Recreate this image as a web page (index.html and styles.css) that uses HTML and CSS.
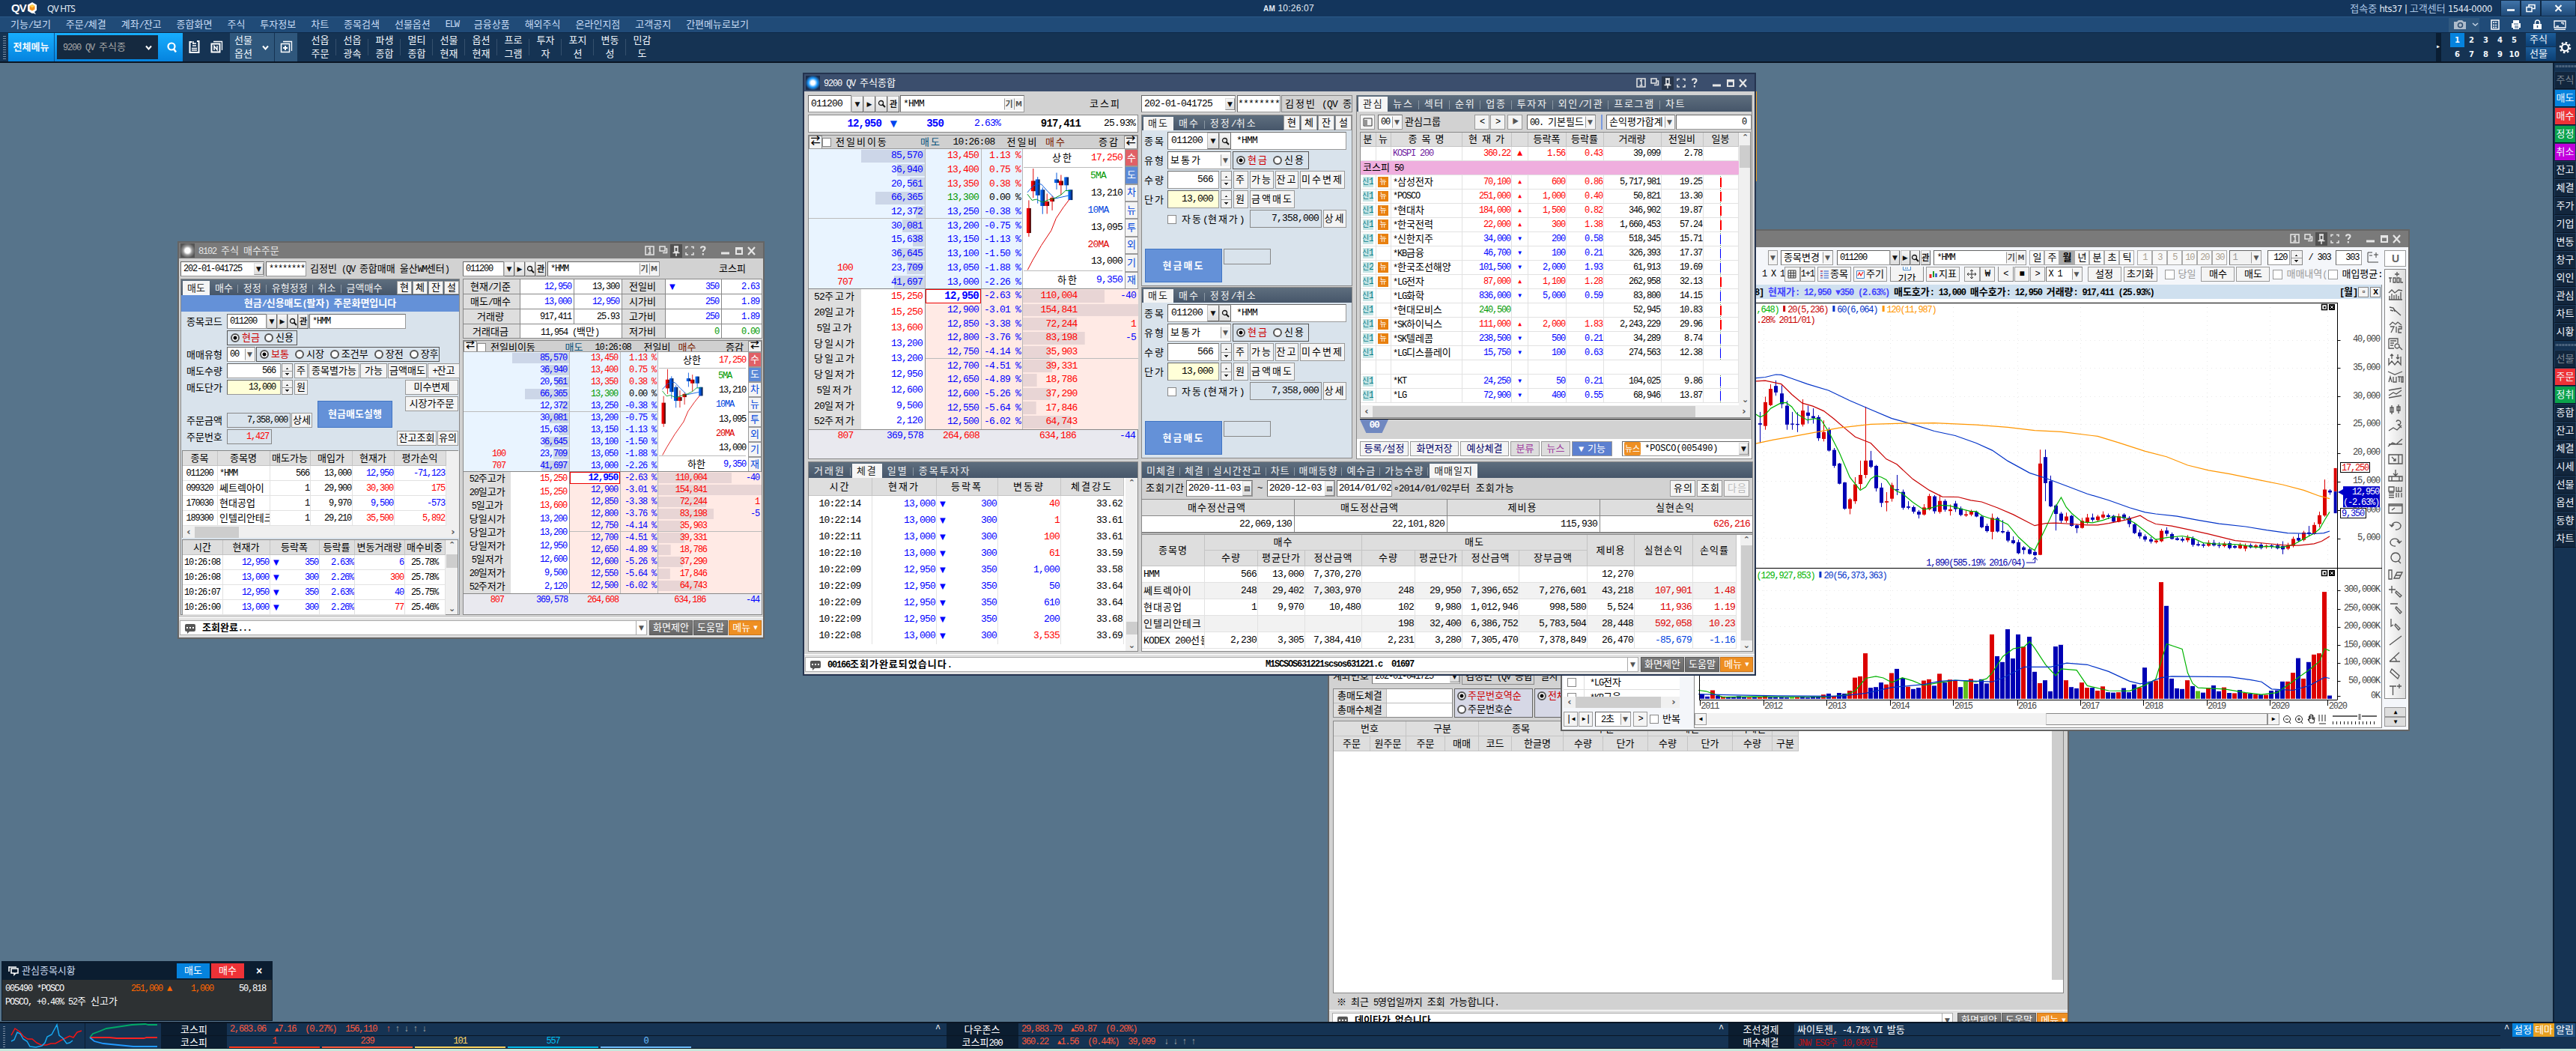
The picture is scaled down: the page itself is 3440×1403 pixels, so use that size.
FILE: index.html
```html
<!DOCTYPE html>
<html lang="ko">
<head>
<meta charset="utf-8">
<title>QV HTS</title>
<link rel="stylesheet" href="styles.css">
</head>
<body>
<div class="app">
  <header class="titlebar">
    <svg class="logo" width="36" height="18" viewBox="0 0 36 18"><text x="0" y="14" class="logo-t">QV</text><path d="M28 1l6 3.500v7L31 14l2 3-4-1.500-1 .5-6-3.500v-8z" fill="#fff"/><path d="M28 4l3.500 2v4.500L28 12.500 24.500 10.500V6z" fill="#f7941d"/><path d="M28 4l3.500 2L28 8.200 24.500 6z" fill="#ffd34d"/></svg>
    <span class="app-name">QV HTS</span>
    <span class="clock"><b>AM</b> 10:26:07</span>
    <span class="conn"><em>접속중</em> hts37 | <em>고객센터</em> 1544-0000</span>
    <span class="sysbtn s1"><svg width="12" height="12"><path d="M1 8.500h10" stroke="#fff" stroke-width="2.500"/></svg></span>
    <span class="sysbtn s1"><svg width="13" height="12" fill="none" stroke="#fff" stroke-width="1.500"><path d="M1 4.500h7v6H1zM4 4V1.500h8v5H9"/></svg></span>
    <span class="sysbtn s2"><svg width="12" height="12"><path d="M1.500 2l8 8m0-8l-8 8" stroke="#fff" stroke-width="2"/></svg></span>
  </header>
  <nav class="menubar">
    <span>기능/보기</span><span>주문/체결</span><span>계좌/잔고</span><span>종합화면</span><span>주식</span><span>투자정보</span><span>차트</span><span>종목검색</span><span>선물옵션</span><span>ELW</span><span>금융상품</span><span>해외주식</span><span>온라인지점</span><span>고객공지</span><span>간편메뉴로보기</span>
    <div class="quick">
      <i class="cam"><svg width="18" height="14"><path d="M1 3h4l2-2h5l2 2h3v10H1z" fill="#aebccb"/><circle cx="9.500" cy="7.500" r="3" fill="none" stroke="#2d4c6e" stroke-width="1.500"/></svg><svg width="9" height="6"><path d="M1 1l3.500 3L8 1" fill="none" stroke="#c3d2e2" stroke-width="1.500"/></svg></i>
      <svg width="12" height="14"><path d="M1 1h10v12H1z" fill="none" stroke="#fff" stroke-width="1.500"/><path d="M3 4h6M3 7.500h6M3 10.500h6" stroke="#fff" stroke-width="1.600" stroke-dasharray="2 .8"/></svg>
      <svg width="14" height="14"><path d="M3 1h8v4h2v6h-2v2H3v-2H1V5h2z" fill="#fff"/><path d="M4 6h6M5 9h5M5 11h5" stroke="#204b78"/></svg>
      <svg width="13" height="14"><path d="M1 6h11v7H1z" fill="#fff"/><path d="M3.500 6V4a3 3 0 0 1 6 0v2" fill="none" stroke="#fff" stroke-width="1.500"/><path d="M6.500 8v3" stroke="#204b78" stroke-width="1.500"/></svg>
      <svg width="17" height="13" fill="none" stroke="#fff"><path d="M1 1h15v9H1zM1 12.500h15M4 7.500V8h3M10 3.500h3V6" stroke-width="1.300"/></svg>
    </div>
  </nav>
  <div class="toolbar">
    <i class="grip"></i>
    <b class="allmenu">전체메뉴</b>
    <div class="finder"><div class="finder-in">9200 QV 주식종 <svg width="9" height="7"><path d="M1 1.500l3.500 4L8 1.500" fill="none" stroke="#fff" stroke-width="2"/></svg></div><svg width="17" height="17"><circle cx="8" cy="7" r="4.500" fill="none" stroke="#fff" stroke-width="2.200"/><path d="M11 10.500l3 4" stroke="#fff" stroke-width="2.500"/></svg></div>
    <span class="tico"><svg width="17" height="18" fill="none" stroke="#fff"><path d="M2.500 2h3M2.500 1v15h12V1H12" stroke-width="2"/><path d="M6 4h5M6 7h5M5 10.500h7M5 13h7M7 1v4" stroke-width="1.300"/></svg></span>
    <span class="tico"><svg width="17" height="18" fill="none" stroke="#fff"><path d="M4 1.500h11.500V13" stroke-width="1.300"/><path d="M1.500 4.500h11v11h-11z" stroke-width="2"/><path d="M5 13V7.500l4 5V7" stroke-width="1.500"/></svg></span>
    <span class="chip c1"><span class="two"><span>선물</span><span>옵션</span></span><svg width="9" height="7"><path d="M1 1.500l3.500 4L8 1.500" fill="none" stroke="#fff" stroke-width="2"/></svg></span>
    <span class="chip c2"><svg width="17" height="18" fill="none" stroke="#fff"><path d="M4 1.500h11.500V14" stroke-width="1.300"/><path d="M1.500 4.500h11v11h-11z" stroke-width="1.500"/><path d="M7 7v6M4 10h6" stroke-width="2"/></svg></span>
    <div class="launch" id="launch"></div>
    <i class="fold">▸</i>
    <div class="screens"><span class="on">1</span><span>2</span><span>3</span><span>4</span><span>5</span><span>6</span><span>7</span><span>8</span><span>9</span><span>10</span></div>
    <div class="modes"><span>주식</span><span>선물</span></div>
    <svg class="gear" width="17" height="17"><circle cx="8.500" cy="8.500" r="4.500" fill="none" stroke="#fff" stroke-width="2.200"/><circle cx="8.500" cy="8.500" r="6.700" fill="none" stroke="#fff" stroke-width="2.200" stroke-dasharray="2.600 2.660"/></svg>
  </div>

  <main class="desktop">
    <aside class="side" id="side"></aside>

    <section class="win gray win-fill">
      <div class="fill-acct"><label>계좌번호</label><div class="field">202-01-041725<i class="dd">▼</i></div><div class="ro">김정빈 (QV 종합</div><label>일자</label></div>
      <div class="fill-sum">
        <div class="fill-tot"><span class="hd">총매도체결</span><span></span><span class="hd">총매수체결</span><span></span></div>
        <div class="rbox"><span><i class="radio on"></i><em>주문번호역순</em></span><span><i class="radio"></i>주문번호순</span></div>
        <div class="rbox b2"><span><i class="radio on"></i><em>전체</em></span></div>
      </div>
      <div class="fill-list"><div><div class="fh1" id="fh1"></div><div class="fh2" id="fh2"></div></div><i class="thumb"></i></div>
      <p class="note">※ 최근 5영업일까지 조회 가능합니다.</p>
      <div class="foot"><div class="msg"><i class="bubble"></i><b>데이타가 없습니다</b><i class="dd2">▼</i></div><span class="fb">화면제안</span><span class="fb">도움말</span><span class="fb or">메뉴<i>▼</i></span></div>
    </section>

    <section class="win gray win-chart">
      <h2 class="wtitle"><span class="wtools"></span></h2>
      <div class="chart-body">
        <div class="chart-main">
          <div class="cbar1"><i class="dd o">▼</i><div class="field w70">종목변경<i class="dd o">▼</i></div><div class="field code">011200</div><i class="mb">▼</i><i class="mb">▶</i><i class="mb mag"></i><i class="mb kk">관</i><div class="field nm">*HMM<i class="dd o kk">기</i><i class="dd o">M</i></div><div class="seg"><span>일</span><span>주</span><span class="on">월</span><span>년</span><span>분</span><span>초</span><span>틱</span></div><div class="seg dim"><span>1</span><span>3</span><span>5</span><span>10</span><span>20</span><span>30</span></div><div class="field w43 dimf">1<i class="dd o">▼</i></div><div class="field w30">120</div><i class="spin"></i><span class="slash">/&nbsp;303</span><div class="field w34">303</div><svg width="18" height="16" fill="none" stroke="#444"><path d="M1 1v13h14M1 1h6M3 5h4M12 1v7M9 4h6"/></svg></div>
          <div class="cbar2"><span class="x1">1 X 1</span><span class="btn w20"><svg width="12" height="12"><path d="M1 1h10v10H1zM1 4.500h10M1 8h10M4.500 1v10M8 1v10" fill="none" stroke="#333"/></svg></span><span class="btn w20">1+1</span><span class="btn w45 m2"><svg width="11" height="11"><path d="M0 1h11M0 4h11M0 7h11M0 10h11" stroke="#25c" stroke-dasharray="3 1.500 7"/><path d="M0 1h3M0 7h3" stroke="#e22"/></svg>종목</span><span class="btn w45 m2"><svg width="11" height="11"><path d="M.5.5h10v10H.5z" fill="#fff" stroke="#48c"/><path d="M2 7l2-4 2 4 3-5" fill="none" stroke="#e22" stroke-width="1.300"/></svg>주기</span><span class="btn w45 m3"><svg width="11" height="11"><path d="M.5.5h10v10H.5z" fill="#fff" stroke="#48c"/><path d="M2 3h7" stroke="#e22"/><path d="M3 5.500h5M3 8h5" stroke="#48c" stroke-width="1.500" stroke-dasharray="1.500 1"/></svg>기간</span><span class="btn w45 m2"><svg width="11" height="11"><path d="M2 5v5" stroke="#e22" stroke-width="3"/><path d="M6 1v8" stroke="#292" stroke-width="2"/><path d="M9.500 4v5" stroke="#25c" stroke-width="2.500"/></svg>지표</span><span class="btn w20 m5"><svg width="14" height="14"><path d="M7 1v12M1 7h12M5 3l2-2 2 2M5 11l2 2 2-2M3 5L1 7l2 2M11 5l2 2-2 2" fill="none" stroke="#333"/></svg></span><span class="btn w20">₩</span><span class="btn w20 m3">&lt;</span><span class="btn w20 m1">■</span><span class="btn w20 m1">&gt;</span><div class="field w49">X 1<i class="dd o">▼</i></div><span class="btn w45 m6">설정</span><span class="btn w45 m2">초기화</span><span class="chk c9"><i></i>당일</span><span class="btn w45 m9">매수</span><span class="btn w45 m1">매도</span><span class="chk c4"><i></i>매매내역(</span><span class="chk blk"><i></i>매입평균:</span></div>
          <div class="chart-split">
            <div class="mini-list">
              <div class="ml-rows"><div><i class="cb"></i><u></u>*LG전자</div><div><i class="cb"></i><u></u>*KB금융</div></div>
              <div class="hsc"><i>‹</i><s></s><i>›</i></div>
              <div class="player"><span class="btn">|◂</span><span class="btn">▸|</span><div class="field">2초<i class="dd o">▼</i></div><span class="btn">&gt;</span><i class="cb"></i><span>반복</span></div>
            </div>
            <div class="chart-col">
              <div class="cinfo"><b>8] <em>현재가: 12,950 ▼350 (2.63%)</em> 매도호가: 13,000 매수호가: 12,950 거래량: 917,411 (25.93%)</b><b class="per">[월]</b><i class="wb">▫</i><i class="wb">x</i></div>
              <svg id="chart" width="919" height="552"></svg>
              <div class="cscroll"><i class="ar">◂</i><div class="track"><s></s></div><i class="ar">▸</i><svg width="136" height="16" fill="none" stroke="#222"><circle cx="10" cy="8" r="4.500"/><path d="M8 8h4M13 11l2 3"/><circle cx="26" cy="8" r="4.500"/><path d="M24 8h4M26 6v4M29 11l2 3"/><path d="M38 8l3 5h5l1-7-1.500 0-.5 3V3h-1.500v5V2H41v6V4h-1.500v6z" fill="#fff"/><path d="M53 2v9M57 2v9M61 2v9M53 14h9" /><path d="M71 4h33M110 4h20" stroke="#666" stroke-width="2"/><path d="M107 1v8" stroke="#888" stroke-width="3"/><path d="M71 13h60" stroke-width="4" stroke-dasharray="1 4"/></svg></div>
            </div>
          </div>
        </div>
        <div class="ctools"><span class="ubtn">U</span><div class="tcol" id="tcol"></div><span class="up">▴</span><span class="up dn">▾</span></div>
      </div>
    </section>

    <section class="win gray win-order">
      <h2 class="wtitle"><i class="qi"></i>8102 주식 매수주문<span class="wtools"></span></h2>
      <div class="order-body">
        <div class="ocol left">
          <div class="acct"><div class="field w112">202-01-041725<i class="dd">▼</i></div><div class="field w54">********</div><span>김정빈 (QV 종합매매 울산WM센터)</span></div>
          <div class="opanel">
            <div class="tabs"><span class="on">매도</span><span>매수</span><span>정정</span><span>유형정정</span><span>취소</span><span>금액매수</span><div class="tb"><i>현</i><i>체</i><i>잔</i><i>설</i></div></div>
            <b class="banner">현금/신용매도(팔자) 주문화면입니다</b>
            <div class="form">
              <div class="fr"><label>종목코드</label><div class="field w53">011200</div><i class="mb">▼</i><i class="mb">▶</i><i class="mb mag"></i><i class="mb kk">관</i><div class="field w129">*HMM</div></div>
              <div class="fr"><label></label><div class="rb"><i class="radio on"></i><em>현금</em><i class="radio"></i>신용</div></div>
              <div class="fr"><label>매매유형</label><div class="field w38">00<i class="dd o">▼</i></div><div class="rb wide"><i class="radio on"></i><em>보통</em><i class="radio"></i>시장<i class="radio"></i>조건부<i class="radio"></i>장전<i class="radio"></i>장후</div></div>
              <div class="fr"><label>매도수량</label><div class="field w72 rt">566</div><i class="spin"></i><span class="btn w18">주</span><span class="btn w68">종목별가능</span><span class="btn w36">가능</span><span class="btn w52">금액매도</span><span class="btn w43">+잔고</span></div>
              <div class="fr"><label>매도단가</label><div class="field w72 rt yl">13,000</div><i class="spin"></i><span class="btn w18">원</span><span class="btn w71 end">미수변제</span></div>
              <div class="fbot">
                <div class="fb1"><div class="fr"><label>주문금액</label><div class="field w85 rt ro2">7,358,000</div><span class="btn w28">상세</span></div><div class="fr"><label>주문번호</label><div class="field w60 rt ro2 r">1,427</div></div></div>
                <b class="exec">현금매도실행</b>
                <div class="fb2"><span class="btn w71">시장가주문</span><div><span class="btn w53">잔고조회</span><span class="btn w28">유의</span></div></div>
              </div>
            </div>
            <div class="tbox"><div class="tb-l"><div id="holdings"></div><div class="hsc"><i>‹</i><s></s><i>›</i></div></div></div>
            <div class="tbox t2"><div id="ticks1"></div><div class="vsc"><i>⌃</i><s></s><i>⌄</i></div></div>
          </div>
        </div>
        <div class="ocol right">
          <div class="acct"><div class="field w55">011200</div><i class="mb">▼</i><i class="mb">▶</i><i class="mb mag"></i><i class="mb kk">관</i><div class="field w150">*HMM<i class="dd o kk">기</i><i class="dd o">M</i></div><span class="mkt">코스피</span></div>
          <div class="quote" id="quote"></div>
          <div class="ladder sm"></div>
        </div>
      </div>
      <div class="foot"><div class="msg"><i class="bubble"></i><b>조회완료...</b><i class="dd2">▼</i></div><span class="fb">화면제안</span><span class="fb">도움말</span><span class="fb or">메뉴<i>▼</i></span></div>
    </section>

    <i class="edge"></i>
    <section class="win navy win-main lg">
      <h2 class="wtitle"><i class="qi blue"></i>9200 QV 주식종합<span class="wtools"></span></h2>
      <div class="mtop">
        <div class="m1">
          <div class="acct"><div class="field w58">011200</div><i class="mb">▼</i><i class="mb">▶</i><i class="mb mag"></i><i class="mb kk">관</i><div class="field w166">*HMM<i class="dd o kk">기</i><i class="dd o">M</i></div><span class="mkt">코스피</span></div>
          <div class="price"><b>12,950</b><i>▼</i><b>350</b><span>2.63%</span><b class="v">917,411</b><span class="k0">25.93%</span></div>
          <div class="ladder"></div>
        </div>
        <div class="m2c">
          <div class="acct"><div class="field w126">202-01-041725<i class="dd">▼</i></div><div class="field w58">********</div><div class="ro">김정빈 (QV 종</div></div>
          <div class="opad"><div class="tabs"><span class="on">매도</span><span>매수</span><span>정정/취소</span><div class="tb"><i>현</i><i>체</i><i>잔</i><i>설</i></div></div><div class="pad"></div></div>
          <div class="opad"><div class="tabs"><span class="on">매도</span><span>매수</span><span>정정/취소</span></div><div class="pad"></div></div>
        </div>
        <div class="m3">
          <div class="tabs"><span class="on">관심</span><span>뉴스</span><span>섹터</span><span>순위</span><span>업종</span><span>투자자</span><span>외인/기관</span><span>프로그램</span><span>차트</span></div>
          <div class="wbar"><span class="btn sq"><svg width="13" height="12"><path d="M1 1h11v10H1z" fill="none" stroke="#333"/><path d="M3 3v7M5 3v7" stroke="#333"/></svg></span><div class="field g1">00<i class="dd o">▼</i></div><span class="gl">관심그룹</span><span class="btn sq">&lt;</span><span class="btn sq">&gt;</span><span class="btn sq p">▶</span><div class="field g2">00. 기본필드<i class="dd o">▼</i></div><i class="vbar"></i><div class="field g3">손익평가합계<i class="dd o">▼</i></div><div class="field g4 rt">0</div></div>
          <div class="wl"><div class="wl-l"><div id="watch"></div><div class="vsc"><i>⌃</i><s></s><i>⌄</i></div></div><div class="hsc"><i>‹</i><s></s><i>›</i></div></div>
          <div class="sheet"><b>00</b></div>
          <div class="wfoot"><span class="btn nv">등록/설정</span><span class="btn nv">화면저장</span><span class="btn nv">예상체결</span><span class="btn pr">분류</span><span class="btn pr">뉴스</span><span class="btn bl">▼ 기능</span><div class="field"><em>뉴스</em>*POSCO(005490)<i class="dd">▼</i></div></div>
        </div>
      </div>
      <div class="mbot">
        <div class="b1"><div class="tabs"><span>거래원</span><span class="on">체결</span><span>일별</span><span>종목투자자</span></div><div class="b1t"><div id="ticks2"></div><div class="vsc"><i>⌃</i><s></s><i>⌄</i></div></div></div>
        <div class="b2c"><div class="tabs"><span>미체결</span><span>체결</span><span>실시간잔고</span><span>차트</span><span>매매동향</span><span>예수금</span><span>가능수량</span><span class="on">매매일지</span></div>
          <div class="query"><span>조회기간</span><div class="field d1">2020-11-03<i class="dd">▤</i></div><span class="til">~</span><div class="field d2">2020-12-03<i class="dd">▤</i></div><div class="field d3">2014/01/02</div><span>∘2014/01/02부터 조회가능</span><span class="btn q1">유의</span><span class="btn">조회</span><span class="btn off">다음</span></div>
          <div class="sum"><span class="hd">매수정산금액</span><span class="hd">매도정산금액</span><span class="hd">제비용</span><span class="hd">실현손익</span><span>22,069,130</span><span>22,101,820</span><span>115,930</span><span class="rd">626,216</span></div>
          <div class="jr"><div id="journal"></div><div class="vsc"><i>⌃</i><s></s><i>⌄</i></div></div>
        </div>
      </div>
      <div class="foot"><div class="msg"><i class="bubble"></i><b class="ma">00166조회가완료되었습니다.</b><b>M1SCSOS631221scsos631221.c&nbsp; 01697</b><i class="dd2">▼</i></div><span class="fb">화면제안</span><span class="fb">도움말</span><span class="fb or">메뉴<i>▼</i></span></div>
    </section>

    <section class="toast">
      <h3><svg width="14" height="14" fill="none" stroke="#fff" stroke-width="1.600"><path d="M1 2h10M1 1v7M4 4h9v6h-3l-2 2v-2H4z"/></svg><span>관심종목시황</span><b class="sell">매도</b><b class="buy">매수</b><i>×</i></h3>
      <p><span>005490 *POSCO</span><span class="o1">251,000 ▲</span><span class="o1 o2">1,000</span><span class="o3">50,818</span></p>
      <p>POSCO, +0.40% 52주 신고가</p>
    </section>
  </main>

  <footer class="status">
    <i class="grip"></i>
    <svg class="sp" width="103" height="34" fill="none"><path d="M4 16l5-9 6 4 5 6 6 4 6 0 6 5 6 3 7 0 6-2 6 0 7-4 6-3 6-3 5 2 5-7 6-2" stroke="#f01414" stroke-width="1.500"/><path d="M4 24l4-2 4-10 4 2 4 7 5 3 4 7 8 1 8-2 4-4 3-8 6-3 7-13 3 14 5 4 5 7 4-1 4-3" stroke="#18a8f0" stroke-width="1.500"/></svg>
    <svg class="sp" width="102" height="34" fill="none"><path d="M6 19l4-5 8-3 10-4 14-2 20-3 18-1 4 1 12 0" stroke="#0a6" stroke-width="1.800"/><path d="M6 19h26l10 1h36l4-1h14" stroke="#f22" stroke-width="1.800"/><path d="M6 19l6 5 12 3 20 2 20 2h32" stroke="#29f" stroke-width="1.800"/></svg>
    <div class="stg">
      <div class="sl">코스피</div><div class="sv"><em>2,683.06&nbsp; <small>▲</small>7.16&nbsp; (0.27%)&nbsp; 156,110&nbsp; ↑</em> <s>↑ ↓ ↑ ↓</s></div><i class="ca">^</i><div class="sl">다우존스</div><div class="sv"><em>29,883.79&nbsp; <small>▲</small>59.87&nbsp; (0.20%)</em></div><i class="ca">^</i><div class="sl">조선경제</div><div class="sv">싸이토젠, -4.71% VI 발동</div>
      <div class="sl">코스피</div><div class="sv cnt"><span class="n1">1</span><span class="n2">239</span><span class="n3">101</span><span class="n4">557</span><span class="n5">0</span></div><i class="ca"></i><div class="sl">코스피200</div><div class="sv"><em>360.22&nbsp; <small>▲</small>1.56&nbsp; (0.44%)&nbsp; 39,099&nbsp;</em> <s>↓ ↓ ↑ ↑</s></div><i class="ca"></i><div class="sl">매수체결</div><div class="sv dr">JNW ESG주 10,000원</div>
    </div>
    <div class="send"><i class="ca">^</i><span class="e1">설정</span><span class="e2">테마</span><span class="e3">알림</span></div>
  </footer>
</div>
<script src="app.js"></script>
</body>
</html>
```
FILE: styles.css
```css
*{box-sizing:border-box;margin:0;padding:0}
body{width:3440px;height:1403px;overflow:hidden;background:#c6e8dc;font:12px/16px "Liberation Mono","Noto Sans CJK KR",monospace;letter-spacing:-1.2px;white-space:nowrap;color:#000}
i,em,s,u{font-style:normal;text-decoration:none}
.k{font-family:"Noto Sans CJK KR",sans-serif;font-size:13px;letter-spacing:0}
.lg{font-size:13px;letter-spacing:-.8px}
.lg .k{letter-spacing:2px}
svg{flex:none;display:block}
.app{width:3440px;height:1400px;display:flex;flex-direction:column;overflow:hidden}
.titlebar{height:22px;background:#13355c;display:flex;align-items:center;color:#e4ecf5;padding-left:15px}
.logo{margin-right:12px}
.logo-t{font:900 15px "Liberation Sans",sans-serif;letter-spacing:-1px;fill:#fff}
.app-name{font:12px "Noto Sans","Liberation Sans",sans-serif;width:1624px;letter-spacing:-.8px}
.clock{font:12px "Liberation Sans",sans-serif;letter-spacing:.2px}.clock b{font-size:10px}
.conn{margin-left:auto;margin-right:11px;font-family:"DejaVu Sans","Liberation Sans",sans-serif;font-size:11.500px;letter-spacing:-.4px}.conn em{color:#a9c4e4}
.sysbtn{height:22px;display:flex;align-items:center;justify-content:center;background:linear-gradient(#4073a8,#1f4b7a);border:1px solid #0e2947}
.s1{width:27px}.s2{width:47px}
.menubar{height:21px;background:#204b78;border-top:1px solid #2b5a88;display:flex;align-items:center;gap:20px;padding-left:14px;color:#c8dcf5}
.quick{margin-left:auto;display:flex;align-items:center;gap:15px;padding-right:13px}
.cam{display:flex;align-items:center;gap:7px;width:41px;height:19px;background:#30587f;padding-left:6px}
.toolbar{height:41px;background:#153353;border-bottom:2px solid #0a1624;border-top:1px solid #0e2947;display:flex;color:#f2f7fc}
.grip{width:11px;background:repeating-linear-gradient(#7d8fa3 0 1px,transparent 1px 3px) 4px 4px/4px 32px no-repeat}
.allmenu{width:62px;background:linear-gradient(#17aeff,#0583de);display:flex;align-items:center;justify-content:center;border-right:1px solid #0a4f8e}
.finder{width:171px;background:linear-gradient(#17aeff,#0583de);display:flex;align-items:center;gap:10px;padding-left:3px}
.finder-in{width:135px;height:32px;background:#15293f;display:flex;align-items:center;justify-content:space-between;padding:0 8px;color:#a8a8a8;overflow:hidden}
.tico{width:30px;display:flex;align-items:center;justify-content:center}
.chip{background:#2f577c;display:flex;align-items:center}
.c1{width:59px;margin-left:3px;padding-left:6px;gap:13px}.c2{width:30px;margin-left:1px;justify-content:center}
.two{display:flex;flex-direction:column}
.launch{display:flex;margin-left:9px}
.launch span.it{width:43px;display:flex;flex-direction:column;align-items:center;justify-content:center;background:linear-gradient(#35506d,#35506d) right/1px 22px no-repeat}
.launch span.it:last-child{background:none}
.fold{margin-left:auto;width:7px;background:#0a1e33;display:flex;align-items:center;font-size:10px}
.screens{display:grid;grid-template-columns:repeat(5,19px);grid-auto-rows:19px;margin-left:12px;font:bold 10px/19px "DejaVu Sans",sans-serif;text-align:center;letter-spacing:0}
.screens .on{background:#0583de}
.modes{margin-left:6px;width:40px}.modes>span{display:flex;height:18px;align-items:center;background:linear-gradient(#1c5c98,#0b3f74);margin-bottom:1px;padding-left:5px}
.gear{margin:11px 6px 0 4px}
.desktop{height:1280px;background:#57748b;position:relative;overflow:hidden}
.side{position:absolute;right:0;top:-1px;width:31px;height:1281px;background:#153353;border-left:2px solid #0c2036;color:#f2f7fc}
.side span.it{display:flex;height:24px;align-items:center;justify-content:center;background:#12263d;border:1px solid #1c3a5a;border-bottom-color:#081524}
.side .grp{display:block;height:12px;background:repeating-linear-gradient(90deg,#6b7f95 0 1px,transparent 1px 2px) 2px 4px/27px 3px no-repeat}
.side .dis{color:#7e8894}.side .cb1{background:#0583de!important}.side .cr{background:#ee3237!important}.side .cg{background:#0ba34c!important}.side .cp{background:#c200dc!important}

.win{position:absolute;background:#d2d2d2;overflow:hidden}
.gray{border:2px solid #656565}.navy{border:2px solid #24334f}
.wtitle{font-size:inherit;font-weight:400;color:#e6e6e6;display:flex;align-items:center;background:#7a7a7a}
.navy .wtitle{background:#3b4e6d;color:#fff;letter-spacing:-1.200px;font-size:12px}.navy .wtitle .k{letter-spacing:0}
.wtools{margin-left:auto;margin-right:8px}
.qi{width:19px;height:19px;margin:0 5px 0 2px;background:radial-gradient(circle at 50% 50%,#fff 0 25%,#999 45%,#555 75%)}
.qi.blue{background:radial-gradient(circle at 50% 50%,#fff 0 20%,#1f9bff 45%,#1b2d4c 75%)}
.acct{display:flex;align-items:center}
.field{background:#fff;border:1px solid #999;border-top-color:#666;border-left-color:#666;display:flex;align-items:center;height:20px;padding-left:3px;overflow:hidden;position:relative;flex:none}
.rt{justify-content:flex-end;padding-right:6px}
.dd,.mb{display:flex;align-items:center;justify-content:center;width:13px;height:16px;background:linear-gradient(#f7f7f7,#dcdcdc);border:1px solid #888;border-top-color:#ddd;border-left-color:#ddd;font:9px/12px "DejaVu Sans","Noto Sans CJK KR",sans-serif;letter-spacing:0;color:#111;flex:none}
.field>.dd{margin-left:auto}
.dd.o{background:#f4f4f4;border-color:transparent transparent transparent #999;color:#555;font-weight:700}
.field>.dd+.dd{margin-left:0}
.mb{width:14px;height:20px;border-color:#bbb #666 #666 #bbb}
.mb .k,.dd .k{font-size:11px;font-weight:700;letter-spacing:0!important}
.btn{height:20px;border:1px solid #999;background:#f4f4f4;display:flex;align-items:center;justify-content:center;flex:none;gap:2px;overflow:hidden}
.radio{width:12px;height:12px;border-radius:50%;border:2px solid #555;background:#fff;flex:none}
.radio.on{background:radial-gradient(#000 0 2.200px,#fff 2.800px)}
.cb{width:12px;height:12px;border:1px solid #888;background:#fff;flex:none;display:block}
.tabs{display:flex;background:linear-gradient(#5e6e7e,#46566a);color:#f2f2f2;align-items:flex-end;flex:none;overflow:hidden}
.tabs>span{display:flex;align-items:center;height:calc(100% - 2px);padding:0 7px;background:linear-gradient(#8a97a3,#8a97a3) right 5px/1px 60% no-repeat}
.tabs>.on{background:#f5f5f5;color:#222;padding:0 6px;margin-left:2px}
.tabs>span:last-of-type{background-image:none}
.tb{margin-left:auto;display:flex;gap:1px;height:100%;align-items:center}
.tb i{width:20px;height:18px;background:#f4f4f4;color:#000;border:1px solid #999;display:flex;align-items:center;justify-content:center}
.tb .k{letter-spacing:0}
.hsc{display:flex;height:16px;background:#f0f0f0;align-items:center;letter-spacing:0}
.hsc i,.vsc i{width:16px;text-align:center;font:bold 13px/14px "DejaVu Sans",sans-serif;color:#555}
.hsc s{height:15px;background:#cdcdcd}.hsc i:last-child{margin-left:auto}
.vsc{width:16px;background:#f0f0f0;display:flex;flex-direction:column;justify-content:space-between;align-items:center;flex:none}
.vsc s{background:#cdcdcd;width:15px}
.vsc i{font-size:11px}
.r{color:#f00!important}.b{color:#00f!important}.g{color:#090!important}.rd{color:#d00!important}.bd{color:#04d!important}.pu{color:#7020a0}
.tr{display:grid}
.tr>div{height:100%;border-right:1px solid #e2e2e2;border-bottom:1px solid #e2e2e2;display:flex;align-items:center;justify-content:flex-end;overflow:hidden;padding-right:1px}
.tr.h>div{background:#dedede;border-color:#c4c4c4;justify-content:center}
.tr>.ctr{justify-content:center}.tr>.lf{justify-content:flex-start;padding-left:2px}.tr>.ar2{justify-content:space-between;padding-left:4px}
.ar2 i,.price i{font:10px/14px "DejaVu Sans",sans-serif;letter-spacing:0}
.foot{display:flex;align-items:center;border-top:1px solid #fff;height:26px;flex:none;gap:1px;background:#e2e2e2;padding:0 2px 0 1px}
.msg{flex:1;height:20px;border:1px solid #aaa;background:#fff;display:flex;align-items:center;gap:9px;padding-left:6px;margin-right:2px}
.bubble{width:14px;height:10px;border-radius:2px;background:radial-gradient(circle,#fff .8px,transparent 1.200px) 1px 0/4px 10px,#555;position:relative}
.bubble::after{content:"";position:absolute;left:3px;top:10px;border:solid transparent;border-width:0 3px 0 0;border-top:3px solid #555}
.dd2{margin-left:auto;font:9px/18px "DejaVu Sans",sans-serif;letter-spacing:0;border-left:1px solid #aaa;height:18px;width:14px;display:flex;align-items:center;justify-content:center;color:#555}
.fb{height:20px;background:linear-gradient(#7c7c7c,#666);color:#fff;border:1px solid #5a5a5a;display:flex;align-items:center;justify-content:center;gap:4px;width:58px}
.fb i{font:7px/10px "DejaVu Sans",sans-serif;letter-spacing:0}
.fb+.fb{width:46px}.fb.or{background:#ee8f22;border-color:#c8741a;width:44px}
.foot .k{letter-spacing:0}

.win-order{left:237px;top:238px;width:784px;height:531px}
.win-order .wtitle{height:21px}
.order-body{display:flex;gap:4px;padding:4px 0 0 2px;height:479px}
.ocol.left{width:373px}.ocol.right{width:400px}
.ocol .acct{height:20px;margin-bottom:3px}
.w112{width:112px;margin-right:2px}.w54{width:54px;margin-right:5px}.w55{width:55px}.w150{width:150px;margin-left:2px}.mkt{margin-left:auto;margin-right:22px}
.opanel{height:449px;border:1px solid #888;background:#d9e3ec}
.opanel .tabs{height:21px}
.banner{display:flex;height:22px;background:#6491d8;color:#fff;align-items:center;justify-content:center}
.form{height:185px;padding-top:3px}
.fr{display:flex;height:22px}
.fr label{width:61px;padding:2px 0 0 7px;flex:none}
.w53{width:53px}.w129{width:129px;margin-left:1px}.w38{width:38px;margin-right:1px}.w72{width:72px}
.spin{width:15px;height:20px;margin:0 2px 0 1px;flex:none;border:1px solid #888;background:linear-gradient(#999,#999) 0 9px/100% 1px no-repeat,conic-gradient(from 135deg at 50% 2px,#222 90deg,transparent 0) 3px 3px/7px 4px no-repeat,conic-gradient(from -45deg at 50% 3px,#222 90deg,transparent 0) 3px 12px/7px 4px no-repeat,#f2f2f2}
.rb{display:flex;align-items:center;gap:3px;border:1px solid #555;height:20px;padding:0 4px}
.rb em,.rbox em{color:#c00}.rb .radio:not(:first-child){margin-left:3px}.rb.wide{width:245px}.rb.wide .radio:not(:first-child){margin-left:5px}
.w18{width:18px;margin-right:1px}.w68{width:68px;margin-right:1px}.w36{width:36px;margin-right:1px}.w52{width:52px;margin-right:1px}.w43{width:43px}.w71{width:71px}.end{margin-left:auto;margin-right:1px}.w28{width:28px}.w85{width:85px;margin-right:1px}.w60{width:60px}
.yl{background:#ffffd8}.ro2{background:#d9e3ec;border-color:#888;padding-right:3px}
.fbot{display:grid;grid-template-columns:182px 100px 1fr}
.fb1{padding-top:22px}
.exec{height:36px;margin-top:6px;background:#6491d8;border:1px solid #3f74c4;color:#fff;display:flex;align-items:center;justify-content:center}
.fb2{display:flex;flex-direction:column;justify-content:space-between;align-items:flex-end;padding-right:1px}.fb2 div{display:flex;gap:1px}
.tbox{height:117px;margin:0 1px;border:1px solid #888;background:#fff}
.tbox .tb-l{width:369px}
.t2{height:101px;margin-top:2px;display:flex;border-width:1px}
.tbox .tr{height:20px}
#holdings{border-right:17px solid #f0f0f0}
#holdings .tr{grid-template-columns:47px 70px 54px 56px 56px 69px}
#ticks1 .tr{grid-template-columns:54px 63px 66px 47px 67px 54px}
.tbox .hsc s{width:59px}.t2 .vsc s{height:18px;margin-bottom:44px}
.quote{display:grid;grid-template-columns:75px 71px 63px 57px 74px 1fr;grid-auto-rows:19px;gap:1px;background:#888;border:1px solid #888;height:80px;width:400px;overflow:hidden}
.quote>div{background:#fff;display:flex;align-items:center;justify-content:flex-end;padding-right:3px}
.quote>.hd{background:#dedede;justify-content:center}.quote>.sp2{grid-column:span 2;justify-content:center}.quote>.ar2{justify-content:space-between;padding-left:5px}

.ladder{--a:156px;--b:75px;--c:55px;--d:154px;--rh:18.700px;--hh:18px;--mc:67px;--mh:139px;margin-top:3px;border:1px solid #888;background:#e9e9ef;flex:1}
.ladder.sm{--a:142px;--b:68px;--c:50px;--d:138px;--rh:16px;--hh:15px;--mc:60px;--mh:118px;height:367px;width:400px;margin-top:2px}
.lh{height:var(--hh);background:#d0d0d0;border-bottom:1px solid #999;display:grid;grid-template-columns:18px 18px auto 1fr var(--b) var(--c) auto 1fr 18px;align-items:center;overflow:hidden}
.lh>*{text-align:center}.lh .sell{color:#05507a;text-align:right;padding-right:6px}.lh .buy{color:#7a2000;padding-left:3px}.lh .chg{text-align:right;padding-right:6px}
.lh i.sw{height:100%;background:#f2f2f2;border:1px solid #888;line-height:13px;font-weight:700;letter-spacing:0}
.lb{display:grid;grid-template-columns:var(--a) var(--b) var(--c) var(--d);border-bottom:1px solid #888}
.lb>div{position:relative}
.lr{height:var(--rh);display:flex;align-items:center;justify-content:flex-end;padding-right:3px}
.lb .sq,.sp3,.sc{background:#e9f4ff}
.lb .sq,.lb .sp3,.lb .sc,.lb .bp,.lb .bc{border-right:1px solid #b8b8b8}
.bp,.bc,.bq{background:#ffeae5}
.lb .sq{width:auto;margin:0;display:block}
.sq .lr{background:linear-gradient(#ccd6e8,#ccd6e8) right/var(--w) calc(100% - 2px) no-repeat;justify-content:space-between;padding-left:38px}
.bq .lr{background:linear-gradient(#e8d5d5,#e8d5d5) left/var(--w) calc(100% - 2px) no-repeat;display:grid;grid-template-columns:48% 52%;text-align:right}
.lb .mid{box-shadow:0 -1px 0 #bbb}
.lb .bl0{border-right:1px solid #888;background:#fff;display:flex;flex-direction:column}
.bl0>div{flex:1;display:grid;grid-template-columns:46% 54%;align-items:center;text-align:right;padding-right:3px}
.bl0>div>:first-child{background:#dedede;height:100%;text-align:center;display:flex;align-items:center;justify-content:center}
.lb .bl0,.lb .bp,.lb .bc,.lb .bq{box-shadow:0 -1px 0 #888}
.bp .cur{border:1px solid #e00;font-weight:700;background:#fff;padding-right:2px;font-size:1.080em}
.sc .lr,.bc .lr{white-space:pre;padding-right:2px}
.mc{display:flex;background:#fff}
.mc .mm{flex:1;display:flex;flex-direction:column;padding:0 3px 0 1px}
.mc .lim{flex:1;display:flex;justify-content:flex-end;gap:24px;align-items:center}
.mc .mv{display:flex;border:solid #bbb;border-width:1px 0;height:var(--mh)}
.mc .mv>div{flex:1;display:flex;flex-direction:column}.mc .mv>div span{flex:1;display:flex;align-items:center;justify-content:flex-end}
.mc .mv>div span:nth-child(odd){justify-content:center}
.mc .sb{width:18px;display:flex;flex-direction:column}.mc .sb i{flex:1;border:1px solid #999;background:#f4f4f4;color:#04d;display:flex;align-items:center;justify-content:center;line-height:14px;overflow:hidden}
.mc .sb .k{letter-spacing:0!important}
.mc .sb i:nth-child(1){background:#e06066;color:#fff}.mc .sb i:nth-child(2){background:#5c8ad6;color:#fff}
.lt{display:grid;height:16px;grid-template-columns:calc(var(--a)*.4) calc(var(--a)*.6) var(--b) calc(var(--c) + var(--d)*.48) 1fr;text-align:right}
.lt>span{padding-right:3px}

.win-main{left:1072px;top:13px;width:1273px;height:805px}
.win-main .wtitle{height:23px}
.mtop{display:flex;height:486px;margin:5px 0 0 5px}
.m1{width:441px;margin-right:4px;display:flex;flex-direction:column}.m2c{width:282px;margin-right:5px}.m3{width:529px;border:1px solid #888;border-top:0;display:flex;flex-direction:column}
.mtop .acct{height:23px;margin-bottom:3px}.m1 .acct .field,.m2c .acct .field{height:23px}.m1 .mb,.m2c .mb{height:22px;width:16px}
.w58{width:58px}.w166{width:166px;margin-left:1px}.w126{width:126px;margin-right:2px}.m2c .w58{margin-right:1px;padding-left:0}
.mtop .mkt{margin-right:23px}
.ro{border:1px solid #888;flex:1;height:23px;display:flex;align-items:center;padding-left:4px;overflow:hidden;position:relative}
.price{height:24px;border:1px solid #888;background:#fff;display:grid;grid-template-columns:97px 21px 62px 76px 107px 1fr;align-items:center;text-align:right;color:#00f;padding-right:3px;flex:none}
.price b{font-size:14px}.price i{color:#04e;font-size:12px}.price .v,.price .k0{color:#000}
.opad{height:229px;border:1px solid #888;background:#d9e3ec;margin-bottom:1px;display:flex;flex-direction:column}
.opad .tabs{height:20px}.opad .tb i{width:22px;height:20px}
.pad{padding:2px 0 0 3px;display:flex;flex-direction:column;flex:1}
.pad .fr{height:26px;display:flex;gap:2px}.pad label{width:29px;padding:4px 0 0}
.pad .field,.pad .btn,.pad .rb,.pad .spin{height:24px}.pad .mb{height:22px}.pad .spin{margin:0;background:linear-gradient(#999,#999) 0 11px/100% 1px no-repeat,conic-gradient(from 135deg at 50% 2px,#222 90deg,transparent 0) 3px 4px/7px 4px no-repeat,conic-gradient(from -45deg at 50% 3px,#222 90deg,transparent 0) 3px 15px/7px 4px no-repeat,#f2f2f2}
.pad .f1{width:239px;padding-left:4px}.f1 .c6{width:48px}
.pad .f2{width:85px}.pad .f3{width:69px;padding-right:7px}
.wq{width:20px}.wr{width:32px}.ws{width:31px}.wt{width:60px}.wu{width:96px}
.pad .chkx{display:flex;align-items:center;gap:7px;width:108px}
.pad .ex{display:flex;gap:2px;margin:26px 0 0 1px}.pad .ex b{width:103px;height:45px;background:#6491d8;border:1px solid #3f74c4;color:#fff;display:flex;align-items:center;justify-content:center}.pad .ex i{width:63px;height:21px;border:1px solid #888}
.m3 .tabs{height:22px}
.wbar{display:flex;align-items:center;height:27px;padding-left:4px}
.m3 .k{letter-spacing:0}.m3{font-size:12px;letter-spacing:-1.200px}
.m3 .tabs .k{letter-spacing:1.700px}
.btn.sq{width:20px;margin-right:1px}.btn.p{margin-left:2px;color:#555;font-size:9px}
.g1{width:33px;margin:0 3px}.gl{width:97px}.g2{width:92px;margin-left:5px}.vbar{width:2px;height:20px;background:#7a9ae0;margin:0 5px 0 7px}.g3{width:92px;margin-right:1px}.g4{width:101px}
.wl{border:1px solid #888;margin:0 1px 0 4px;height:382px;background:#fff}
.wl-l{display:flex;height:364px;overflow:hidden}
#watch{width:505px}#watch .tr{height:19px;grid-template-columns:21px 20px 95px 66px 22px 51px 50px 77px 56px 47px}
.wl .vsc s{height:30px;margin-bottom:300px}.wl .hsc s{width:431px}
#watch .pink{height:19px;background:#efaede;padding-left:3px;border-bottom:1px solid #e2e2e2}
#watch .s1i{width:14px;height:14px;background:#c4e4e4;color:#05808c;display:flex;align-items:center;justify-content:center;overflow:hidden}
#watch .s1i .k,#watch .nw .k{font-size:10px;line-height:14px}
#watch .nw{width:14px;height:14px;background:#e88010;color:#fff;display:flex;align-items:center;justify-content:center;overflow:hidden}
.cd{width:5px;height:17px;background:repeating-linear-gradient(#484 0 1px,transparent 1px 2px) 2px 0/1px 100% no-repeat;display:block}
.cd s{display:block;width:2px;height:13px;margin:2px 0 0 2px;background:currentColor}.cd.b s{width:1px}
.sheet{margin:1px 1px 0 4px;border-top:1px solid #000;height:27px}
.sheet b{display:block;width:38px;height:18px;background:#7088c0;clip-path:polygon(0 0,100% 0,78% 100%,22% 100%);color:#fff;text-align:center;font-size:13px}
.wfoot{background:#fff;flex:1;display:flex;align-items:center;padding-left:4px;gap:2px}
.wfoot .btn{width:39px}.wfoot .nv{width:65px;color:#006}.wfoot .pr{color:#a040a0;background:#ddd}.wfoot .bl{width:54px;background:#5c80d0;color:#fff}
.wfoot .field{width:170px;margin-left:11px;gap:5px;padding-left:2px;letter-spacing:-.2px}.wfoot em{background:#ee8f22;color:#fff;padding:0 1px;border-radius:2px}.wfoot em .k{font-size:11px}
.mbot{display:flex;gap:4px;height:254px;margin:3px 0 0 5px}
.b1{width:441px;border:1px solid #888;display:flex;flex-direction:column;background:#fff}
.mbot .tabs{height:21px}
.b1t{display:flex;flex:1}
#ticks2{width:422px}#ticks2 .tr{height:22px;grid-template-columns:85px 86px 82px 84px 84px}
#ticks2 .tr.h{height:24px}#ticks2 .tr:not(.h)>div{border-bottom:0}
.b1t .vsc{margin-left:2px}.b1t .vsc s{height:17px;margin-top:170px}
.b2c{width:817px;border:1px solid #888;display:flex;flex-direction:column}
.b2c .tabs>span{padding:0 6px}.b2c .k{letter-spacing:1px}
.query{height:28px;display:flex;align-items:center;padding:0 4px 0 5px;gap:2px}
.query .field,.query .btn{height:22px;padding-left:2px}.query .dd{height:20px}.query .d1{width:89px}.til{width:15px;text-align:center}.query .d2{width:91px}.query .d3{width:74px}.query .btn{width:34px}.q1{margin-left:auto}.off{color:#bbb}
.sum{display:grid;grid-template-columns:203px 203px 203px 1fr;grid-auto-rows:21px;gap:1px;background:#888;border:solid #888;border-width:1px 0 2px;flex:none}
.sum>span{background:#fff;display:flex;align-items:center;justify-content:flex-end;padding-right:3px}.sum>.hd{background:#dedede;justify-content:center}
.jr{display:flex;flex:1;background:#fff;margin-top:1px;border-top:1px solid #888;overflow:hidden}
#journal{width:795px}
#journal .tr{height:22px;grid-template-columns:84px 71px 63px 76px 71px 63px 76px 91px 63px 78px 58px}
#journal .tr:nth-child(odd)>div{background:#f2f2f2}
.jh{display:grid;height:42px;grid-template-columns:84px 71px 63px 76px 71px 63px 76px 91px 63px 78px 58px;grid-template-rows:21px 21px}
.jh div{background:#dedede;border:solid #c4c4c4;border-width:0 1px 1px 0;display:flex;align-items:center;justify-content:center}
.jh .v2{grid-row:span 2}.jh .h3{grid-column:span 3}.jh .h4{grid-column:span 4}
.jr .vsc{margin-left:4px}.jr .vsc s{flex:1}
.win-main .foot{height:27px;margin-top:3px;letter-spacing:-1.200px;font-size:12px}
.win-main .foot .ma{width:576px}
.win-main .foot .ma .k{letter-spacing:1px}
.edge{position:absolute;left:2345px;top:38px;width:1px;height:120px;background:#f5a623}

.win-chart{left:2084px;top:222px;width:1134px;height:670px;background:#f4f6fa}
.win-chart .wtitle{height:22px}
.chart-body{display:flex;padding-top:4px}
.chart-main{width:1095px}
.cbar1{display:flex;align-items:center;height:20px;padding-left:275px}
.cbar1>*{flex:none}
.cbar1>.dd.o{border:1px solid #999;height:20px;margin-right:4px}
.cbar1 .w70{width:70px;margin-right:5px}.cbar1 .code{width:71px}.cbar1 .mb{width:13px;margin-right:.6px}.cbar1 .nm{width:124px;margin-right:4px;margin-left:4px}
.seg{display:flex;margin-right:4px}.seg>span{width:20px;height:20px;border:1px solid #aaa;background:#f8f8f8;display:flex;align-items:center;justify-content:center}.seg>.on{background:#aaa;font-weight:700}.seg.dim{color:#aaa090;margin-right:3px}
.cbar1 .w43{width:43px;margin-right:8px;background:#f2f2f2}.cbar1 .w30,.cbar1 .w34{justify-content:flex-end;padding:0 3px 0 0}.w30{width:30px}.cbar1 .spin{width:16px}.slash{margin-left:5px;width:37px}.w34{width:35px;margin-right:7px}.dimf{color:#999}
.cbar2{display:flex;align-items:center;height:20px;margin-top:2px;padding-left:267px;overflow:hidden}
.x1{width:38px}.w20{width:20.500px}.w45{width:45px}.btn.w20.m1{width:20px;margin:0 0 0 1px}.btn.w45.m1{width:45px;margin:0 0 0 2px}.btn.m2{margin-left:3px}.btn.m3{margin-left:4px}.m1.btn{flex-direction:row}.m5{margin-left:6px}.m6{margin-left:7px}.w49{width:49px;margin-left:1px}.btn.m9{margin-left:7px}
.chk{display:flex;align-items:center;gap:5px;color:#999}.chk i{width:13px;height:13px;border:1px solid #999;background:#fff;flex:none}.c9{margin-left:10px}.c4{margin:0 4px;width:70px}.blk{color:#000}
.chart-split{display:flex;margin-top:4px;height:592px}
.mini-list{width:176px;display:flex;flex-direction:column;padding:521px 4px 0 2px}
.ml-rows{height:29px;overflow:hidden;background:#fff;width:155px}.ml-rows>div{height:20px;display:flex;align-items:center;gap:10px;padding-left:5px;border-bottom:1px solid #ddd}.ml-rows u{width:1px;height:20px;background:#ddd;margin-right:-3px}
.mini-list .hsc s{width:114px}.mini-list .hsc{width:155px}
.player{display:flex;height:24px;align-items:center;margin-top:3px;gap:1px}.player .btn{width:19px}.player .field{width:48px;padding-left:7px;margin:0 2px}.player .cb{margin:0 4px 0 2px}
.chart-col{width:919px;background:#fff;border:1px solid #888;border-width:0 1px 1px}
.cinfo{height:19px;background:#cfe0ef;display:flex;align-items:center;padding-left:80px}
.cinfo em{color:#44f}.cinfo .per{margin-left:auto}.wb{width:14px;height:14px;background:#f4f4f4;border:1px solid #888;margin:0 1px;display:flex;align-items:center;justify-content:center;font-weight:700}
#chart text{font:12px "Liberation Mono","Noto Sans CJK KR",monospace;letter-spacing:-1.200px}
.cscroll{height:17px;display:flex;align-items:center}.cscroll .ar{width:16px;height:16px;background:#f4f4f4;border:1px solid #999;display:flex;align-items:center;justify-content:center;letter-spacing:0}
.track{flex:1;height:16px;background:#f2f2f2}.track s{display:block;margin-left:auto;width:296px;height:16px;background:#f2f2f2;border:1px solid #888;border-left-color:#ccc}
.ctools{margin-left:3px;width:29px;display:flex;flex-direction:column}
.ubtn{height:22px;border:1px solid #999;background:#fff;display:flex;align-items:center;justify-content:center;font:bold 14px "Liberation Sans",sans-serif;color:#666}
.tcol{margin-top:3px;height:574px;border:1px solid #888;background:linear-gradient(90deg,#fff,#ddd);display:flex;flex-direction:column;justify-content:space-around;align-items:center}
.up{height:13px;background:#ddd;border:1px solid #999;margin-top:11px;display:flex;align-items:center;justify-content:center}.dn{margin-top:0}

.win-fill{left:1773px;top:600px;width:990px;height:700px;padding-left:5px;display:flex;flex-direction:column}
.fill-acct{display:flex;align-items:center;height:20px;margin-top:207px;gap:2px;flex:none}.fill-acct label{width:50px}.fill-acct .field{width:118px}.fill-acct .ro{flex:none;width:97px;height:22px;margin-right:6px}
.fill-sum{display:flex;margin-top:6px;height:39px;gap:2px;flex:none}
.fill-tot{display:grid;grid-template-columns:70px 87px;grid-auto-rows:18px;gap:1px;background:#bbb;border:1px solid #888}.fill-tot>span{background:#fff;padding-left:5px}.fill-tot>.hd{background:#dedede}
.rbox{border:1px solid #666;background:#d6d8e6;width:105px;display:flex;flex-direction:column}.rbox>span{display:flex;align-items:center;gap:2px;height:18px}.rbox .radio{margin-left:3px}
.fill-list{margin-top:4px;height:364px;border:1px solid #888;background:#fff;width:976px;display:flex;justify-content:space-between;flex:none}
.thumb{width:15px;height:345px;background:#cdcdcd}
.fh1,.fh2{display:grid;height:20px;grid-template-columns:97px 97px 113px 113px 113px 53px 35px}
.fh2{grid-template-columns:49px 48px 52px 45px 44px 69px 53px 60px 53px 60px 53px 35px}
.fh1 div,.fh2 div{background:#dedede;border:solid #c4c4c4;border-width:0 1px 1px 0;display:flex;align-items:center;justify-content:center}
.note{height:21px;padding:3px 0 0 5px;flex:none}
.win-fill .foot{margin:1px -5px 0;margin-left:-5px;padding-left:4px}
.win-fill .msg{margin-right:5px}

.toast{position:absolute;left:2px;top:1199px;width:362px;height:80px;background:#2d3133;border:1px solid #0b1d30;color:#fff}
.toast h3{height:24px;background:#0b1d30;display:flex;align-items:center;padding-left:8px;font-weight:400;font-size:12px}
.toast h3 span{margin-left:4px;color:#c9d8ee}.toast h3>span{width:207px}.toast h3 span span{margin-left:0}
.toast h3 b{width:44px;height:20px;display:flex;align-items:center;justify-content:center;font-weight:400;background:#0583de;margin-right:2px}.toast .buy{background:#ee3237!important}.toast h3 i{margin:0 auto;font:bold 14px "Liberation Sans",sans-serif}
.toast b span{margin:0!important;color:#fff!important}
.toast p{padding:3px 4px 0;display:flex;height:15px;align-items:center;margin-top:1px}
.toast p:nth-of-type(1){display:grid;grid-template-columns:168px 66px 44px 1fr;height:18px}.o1{color:#f60}.o2,.o3{text-align:right}.o3{padding-right:4px}
.status{height:36px;background:#153353;border-top:2px solid #0a1624;display:flex;color:#fff}
.status .grip{background-size:3px 30px}
.sp{border-right:1px solid #0b1d30}
.stg{display:grid;grid-template-columns:87px 937px 24px 96px 928px 20px 88px 1fr;grid-template-rows:17px 17px;flex:1}
.stg>*{border-bottom:1px solid #0a1624;overflow:hidden;height:17px;line-height:16px}
.sl{background:#0b1d30;text-align:center;padding-right:1px}.sv{padding-left:4px}.sv em{color:#ff5a3c}.sv s{color:#aaa}.sv small{font-size:9px}.dr{color:#c01010}
.ca{text-align:center}
.cnt{display:flex;padding:0;gap:3px;padding-left:3px}.cnt>span{width:121px;text-align:center;border-bottom:2px solid;height:16px;line-height:14px}
.n1{color:#ff3c20}.n2{color:#ff5a3c}.n3{color:#ffd760}.n4{color:#00c0f0}.n5{color:#6fc0ff}
.send{width:101px;display:grid;grid-template-columns:16px 28px 28px 28px;align-items:start}.send span{text-align:center}.send>.e1{background:#0583de}.send>.e2{background:#e8a020}.send>.e3{background:#205080}
```
FILE: app.js
```js
const $ = s => document.querySelector(s);
const $$ = s => [...document.querySelectorAll(s)];

// A cell is written "flags~text": r b g x y = colour, c = centre, l = left, d = down arrow in front.
function cell(v) {
  const m = /^([a-z]+)~(.*)$/.exec(v);
  if (!m) return `<div>${v}</div>`;
  const f = m[1], cls = [];
  for (const k of ['r', 'b', 'g']) if (f.includes(k)) cls.push(k);
  if (f.includes('c')) cls.push('ctr');
  if (f.includes('l')) cls.push('lf');
  if (f.includes('x')) cls.push('rd');
  if (f.includes('y')) cls.push('bd');
  const arrow = f.includes('d') ? (cls.push('ar2'), '<i>▼</i>') : '';
  return `<div class="${cls.join(' ')}">${arrow}<span>${m[2]}</span></div>`;
}
const row = (r, h) => `<div class="tr${h ? ' h' : ''}">${r.split('|').map(cell).join('')}</div>`;
const table = (id, head, rows) => { $(id).innerHTML = row(head, 1) + rows.map(r => row(r)).join(''); };

$('#launch').innerHTML = '선옵 주문|선옵 광속|파생 종합|멀티 종합|선물 현재|옵션 현재|프로 그램|투자 자|포지 션|변동 성|민감 도'.split('|')
  .map(t => `<span class="it">${t.split(' ').map(x => `<span>${x}</span>`).join('')}</span>`).join('');

const sideItem = (t, c = '') => `<span class="it ${c}">${t}</span>`;
$('#side').innerHTML = '<i class="grp"></i>' + sideItem('주식', 'dis') + sideItem('매도', 'cb1') + sideItem('매수', 'cr') + sideItem('정정', 'cg') + sideItem('취소', 'cp')
  + '잔고 체결 주가 기업 변동 창구 외인 관심 차트 시황'.split(' ').map(t => sideItem(t)).join('')
  + '<i class="grp"></i>' + sideItem('선물', 'dis') + sideItem('주문', 'cr') + sideItem('정취', 'cg')
  + '종합 잔고 체결 시세 선물 옵션 동향 차트'.split(' ').map(t => sideItem(t)).join('');

$$('.wtools').forEach(e => {
  e.innerHTML = `<svg width="150" height="20" fill="none" stroke="#e6e6e6" stroke-width="1.500">
  <path d="M1 4h11v11H1zM5 7l2-1v7M4.500 13h4"/><path d="M20 4h7v6h-7zM24 12.500h5.500V7H28"/>
  <path d="M34 1h16v18H34z" fill="#0005" stroke="none"/><path d="M39 4h6M40 5h4v6h-4zM37.500 12.500h9M42 13v4" />
  <path d="M55 7V4.500h3M62 4.500h3V7M65 12v3h-3M58 15h-3v-3"/><path d="M75 6.500c0-3 5.500-3 5.500 0 0 2-2.700 2-2.700 4.500M77.800 13v2.500" stroke-width="2"/>
  <path d="M102 13h11" stroke-width="3"/><path d="M122 6h8v8h-8zM122 7.500h8" stroke-width="2"/><path d="M138 5l9 10m0-10l-9 10" stroke-width="2.200"/></svg>`;
});

table('#holdings', '종목|종목명|매도가능|매입가|현재가|평가손익', [
  'c~011200|l~*HMM|566|13,000|b~12,950|b~-71,123', 'c~099320|l~쎄트렉아이|1|29,900|r~30,300|r~175',
  'c~170030|l~현대공업|1|9,970|b~9,500|b~-573', 'c~189300|l~인텔리안테크|1|29,210|r~35,500|r~5,892']);
table('#ticks1', '시간|현재가|등락폭|등락률|변동거래량|매수비중', [
  'c~10:26:08|b~12,950|db~350|b~2.63%|b~6|c~25.78%', 'c~10:26:08|b~13,000|db~300|b~2.26%|r~300|c~25.78%',
  'c~10:26:07|b~12,950|db~350|b~2.63%|b~40|c~25.75%', 'c~10:26:00|b~13,000|db~300|b~2.26%|r~77|c~25.46%']);
table('#ticks2', '시간|현재가|등락폭|변동량|체결강도', [
  'c~10:22:14|b~13,000|db~300|r~40|33.62', 'c~10:22:14|b~13,000|db~300|r~1|33.61', 'c~10:22:11|b~13,000|db~300|r~100|33.61',
  'c~10:22:10|b~13,000|db~300|r~61|33.59', 'c~10:22:09|b~12,950|db~350|b~1,000|33.58', 'c~10:22:09|b~12,950|db~350|b~50|33.64',
  'c~10:22:09|b~12,950|db~350|b~610|33.64', 'c~10:22:09|b~12,950|db~350|b~200|33.68', 'c~10:22:08|b~13,000|db~300|r~3,535|33.69']);

$('#quote').innerHTML = [
  ['hd', '현재/기준'], ['b', '12,950'], ['', '13,300'], ['hd', '전일비'], ['b ar2', '<i>▼</i><span>350</span>'], ['b', '2.63'],
  ['hd', '매도/매수'], ['b', '13,000'], ['b', '12,950'], ['hd', '시가비'], ['b', '250'], ['b', '1.89'],
  ['hd', '거래량'], ['', '917,411'], ['', '25.93'], ['hd', '고가비'], ['b', '250'], ['b', '1.89'],
  ['hd', '거래대금'], ['sp2', '11,954 (백만)'], ['hd', '저가비'], ['g', '0'], ['g', '0.00']
].map(([c, t]) => `<div class="${c}">${t}</div>`).join('');

const sells = [[85570, '13,450', '1.13'], [36940, '13,400', '0.75'], [20561, '13,350', '0.38'], [66365, '13,300', '0.00'], [12372, '13,250', '-0.38'],
  [30081, '13,200', '-0.75'], [15638, '13,150', '-1.13'], [36645, '13,100', '-1.50'], [23709, '13,050', '-1.88', 100], [41697, '13,000', '-2.26', 707]];
const buys = [[110004, '12,950', '-2.63', -40], [154841, '12,900', '-3.01'], [72244, '12,850', '-3.38', 1], [83198, '12,800', '-3.76', -5], [35903, '12,750', '-4.14'],
  [39331, '12,700', '-4.51'], [18786, '12,650', '-4.89'], [37290, '12,600', '-5.26'], [17846, '12,550', '-5.64'], [64743, '12,500', '-6.02']];
const refs = [['52주고가', '15,250', 'r'], ['20일고가', '15,250', 'r'], ['5일고가', '13,600', 'r'], ['당일시가', '13,200', 'b'], ['당일고가', '13,200', 'b'],
  ['당일저가', '12,950', 'b'], ['5일저가', '12,600', 'b'], ['20일저가', '9,500', 'b'], ['52주저가', '2,120', 'b']];
const fmt = n => n.toLocaleString('en-US');
const tone = i => i < 3 ? 'r' : i === 3 ? 'g' : 'b';

function miniChart(id) {
  const c = [['r', 909, 549, 650, 517, 665], ['r', 927, 438, 480, 388, 507], ['b', 945, 432, 497, 422, 530], ['b', 965, 474, 540, 465, 573], ['r', 983, 522, 540, 490, 572],
    ['r', 1004, 507, 522, 500, 558], ['b', 1022, 432, 446, 405, 473], ['r', 1040, 438, 456, 414, 495], ['b', 1062, 423, 456, 423, 478], ['b', 1078, 474, 516, 474, 516]];
  return `<svg style="width:var(--mc);height:100%" viewBox="888 385 204 417" preserveAspectRatio="none"><defs>
  <linearGradient id="gr${id}"><stop offset="0" stop-color="#e00"/><stop offset=".4" stop-color="#e00"/><stop offset="1" stop-color="#200"/></linearGradient>
  <linearGradient id="gb${id}"><stop offset="0" stop-color="#06e"/><stop offset=".4" stop-color="#05d"/><stop offset="1" stop-color="#013"/></linearGradient></defs>`
    + c.map(([k, x, t, b, h, l]) => `<path d="M${x} ${h}V${l}" stroke="${k === 'r' ? '#d00' : '#05d'}" stroke-width="3"/><rect x="${x - 9}" y="${t}" width="18" height="${b - t}" fill="url(#g${k}${id})"/>`).join('')
    + `<g fill="none" stroke-width="3"><path stroke="#05d" d="M903 485L925 460 945 450 960 452 985 480 1015 510 1070 498"/><path stroke="#092" d="M903 492L922 517 940 513 965 525 990 515 1015 508 1040 495 1058 478 1080 478"/><path stroke="#d00" d="M904 800L925 760 960 700 1000 640 1020 590 1050 545 1075 512"/></g></svg>`;
}

$$('.ladder').forEach((el, n) => {
  const w = q => `--w:calc(var(--d) * ${(q / 154841).toFixed(3)})`;
  el.innerHTML = `<div class="lh"><i class="sw">⇄</i><i class="cb"></i><span>전일비이동</span><span class="sell">매도</span><span>10:26:08</span><span>전일비</span><span class="buy">매수</span><span class="chg">증감</span><i class="sw">⇄</i></div>
  <div class="lb">
   <div class="sq">${sells.map((s, i) => `<div class="lr ${i === 5 ? 'mid' : ''}" style="${w(s[0])}"><span class="r">${s[3] || ''}</span><span class="b">${fmt(s[0])}</span></div>`).join('')}</div>
   <div class="sp3">${sells.map((s, i) => `<div class="lr ${tone(i)} ${i === 5 ? 'mid' : ''}">${s[1]}</div>`).join('')}</div>
   <div class="sc">${sells.map((s, i) => `<div class="lr ${i === 3 ? '' : tone(i)} ${i === 5 ? 'mid' : ''}">${s[2]} %</div>`).join('')}</div>
   <div class="mc"><div class="mm"><div class="lim"><span>상한</span><span class="r">17,250</span></div><div class="mv">${miniChart(n)}<div><span class="g">5MA</span><span>13,210</span><span class="bd">10MA</span><span>13,095</span><span class="rd">20MA</span><span>13,000</span></div></div><div class="lim"><span>하한</span><span class="b">9,350</span></div></div>
    <div class="sb">${[...'수도차뉴투외기재'].map(t => `<i>${t}</i>`).join('')}</div></div>
   <div class="bl0">${refs.map(r => `<div><span>${r[0]}</span><span class="${r[2]}">${r[1]}</span></div>`).join('')}</div>
   <div class="bp">${buys.map((s, i) => `<div class="lr b ${i === 0 ? 'cur' : ''} ${i === 5 ? 'mid' : ''}">${s[1]}</div>`).join('')}</div>
   <div class="bc">${buys.map((s, i) => `<div class="lr b ${i === 5 ? 'mid' : ''}">${s[2]} %</div>`).join('')}</div>
   <div class="bq">${buys.map((s, i) => `<div class="lr ${i === 5 ? 'mid' : ''}" style="${w(s[0])}"><span class="r">${fmt(s[0])}</span><span class="${s[3] > 0 ? 'r' : 'b'}">${s[3] || ''}</span></div>`).join('')}</div>
  </div><div class="lt"><span class="r">807</span><span class="b">369,578</span><span class="r">264,608</span><span class="r">634,186</span><span class="b">-44</span></div>`;
});

$$('.pad').forEach(p => {
  p.innerHTML = `<div class="fr"><label>종목</label><div class="field f1"><span class="c6">011200</span><i class="mb">▼</i><i class="mb mag"></i><span>&nbsp;*HMM</span></div></div>
  <div class="fr"><label>유형</label><div class="field f2">보통가<i class="dd o">▼</i></div><div class="rb"><i class="radio on"></i><em>현금</em><i class="radio"></i>신용</div></div>
  <div class="fr"><label>수량</label><div class="field f3 rt">566</div><i class="spin"></i><span class="btn wq">주</span><span class="btn wr">가능</span><span class="btn ws">잔고</span><span class="btn wt">미수변제</span></div>
  <div class="fr"><label>단가</label><div class="field f3 rt yl">13,000</div><i class="spin"></i><span class="btn wq">원</span><span class="btn wt">금액매도</span></div>
  <div class="fr"><label></label><span class="chkx"><i class="cb"></i>자동(현재가)</span><div class="field rt ro2 wu">7,358,000</div><span class="btn ws">상세</span></div>
  <div class="ex"><b>현금매도</b><i></i></div>`;
});
$$('.mag').forEach(e => { e.innerHTML = '<svg width="11" height="11" fill="none" stroke="#111"><circle cx="4.500" cy="4.500" r="3" stroke-width="1.300"/><path d="M6.500 6.500l3.500 3.500" stroke-width="2"/></svg>'; });

// name | price | dir | change | rate | volume | vs. previous | credit | news
const watch = ['삼성전자|70,100|u|600|0.86|5,717,981|19.25|1|n', 'POSCO|251,000|u|1,000|0.40|50,821|13.30|1|n', '현대차|184,000|u|1,500|0.82|346,902|19.87|1|n',
  '한국전력|22,000|u|300|1.38|1,660,453|57.24|1|n', '신한지주|34,000|d|200|0.58|518,345|15.71|1|n', 'KB금융|46,700|d|100|0.21|326,393|17.37|1|',
  '한국조선해양|101,500|d|2,000|1.93|61,913|19.69|2|n', 'LG전자|87,000|u|1,100|1.28|262,958|32.13|1|n', 'LG화학|836,000|d|5,000|0.59|83,800|14.15|1|',
  '현대모비스|240,500|g|||52,945|10.83|1|', 'SK하이닉스|111,000|u|2,000|1.83|2,243,229|29.96|1|n', 'SK텔레콤|238,500|d|500|0.21|34,289|8.74|1|n',
  'LG디스플레이|15,750|d|100|0.63|274,563|12.38|1|', '', 'KT|24,250|d|50|0.21|104,025|9.86|1|', 'LG|72,900|d|400|0.55|68,946|13.87|1|'];
$('#watch').innerHTML = row('분|뉴|종 목 명|현 재 가||등락폭|등락률|거래량|전일비|일봉', 1)
  + '<div class="tr"><div></div><div></div><div class="lf pu">KOSPI 200</div><div class="r">360.22</div><div class="ctr r">▲</div><div class="r">1.56</div><div class="r">0.43</div><div>39,099</div><div>2.78</div><div></div></div><div class="pink">코스피 50</div>'
  + watch.map(s => {
    if (!s) return '<div class="tr">' + '<div></div>'.repeat(10) + '</div>';
    const [n, p, d, c, r, v, q, s1, nw] = s.split('|');
    const k = d === 'u' ? 'r' : d === 'd' ? 'b' : 'g', mark = d === 'u' ? '▴' : d === 'd' ? '▾' : '';
    return `<div class="tr"><div class="ctr"><span class="s1i">신${s1}</span></div><div class="ctr">${nw ? '<span class="nw">뉴</span>' : ''}</div><div class="lf">*${n}</div><div class="${k}">${p}</div><div class="ctr ${k}">${mark}</div><div class="${k}">${c}</div><div class="${k}">${r}</div><div>${v}</div><div>${q}</div><div class="ctr"><i class="cd ${k === 'b' ? 'b' : 'r'}"><s></s></i></div></div>`;
  }).join('');

const J = ['l~HMM|566|13,000|7,370,270|||||12,270||', 'l~쎄트렉아이|248|29,402|7,303,970|248|29,950|7,396,652|7,276,601|43,218|x~107,901|x~1.48',
  'l~현대공업|1|9,970|10,480|102|9,980|1,012,946|998,580|5,524|x~11,936|x~1.19', 'l~인텔리안테크||||198|32,400|6,386,752|5,783,504|28,448|x~592,058|x~10.23',
  'l~KODEX 200선물|2,230|3,305|7,384,410|2,231|3,280|7,305,470|7,378,849|26,470|y~-85,679|y~-1.16'];
$('#journal').innerHTML = '<div class="jh"><div class="v2">종목명</div><div class="h3">매수</div><div class="h4">매도</div><div class="v2">제비용</div><div class="v2">실현손익</div><div class="v2">손익률</div>'
  + '수량 평균단가 정산금액 수량 평균단가 정산금액 장부금액'.split(' ').map(t => `<div>${t}</div>`).join('') + '</div>' + J.map(r => row(r)).join('');

$('#fh1').innerHTML = ['번호', '구분', '종목', '주문', '체결', '미체결', ''].map(t => `<div>${t}</div>`).join('');
$('#fh2').innerHTML = '주문 원주문 주문 매매 코드 한글명 수량 단가 수량 단가 수량 구분'.split(' ').map(t => `<div>${t}</div>`).join('');

// Tool column icons, each on a 22x18 box
$('#tcol').innerHTML = ['M13 1v6M10 4h6M2 9h4M4 9v6M8 9h3v6H8zM13 9h3v6h-3zM18 9v6h3', 'M2 16h18M3 16v-5M6 16v-8M9 16v-6M12 16v-7M15 16v-5M18 16V6M2 7l4-4 4 4 5-4 5 1',
  'M3 4l5 1 2 3 8 7M8 9l-4-1M8 5l2 5', 'M3 6l4-4 4 3 3-3 5 4M4 8h5l-4 8M12 8v8M15 8h4v3h-4v5h4', 'M2 2h12v6M2 2v13h7M4 5h8M4 8h5M4 11h4M13 9a3 3 0 1 0 .1 0M16 13l4 4',
  'M2 6v9l4-5 4 5 4-5 4 5V4M6 1v6M4 3l2-2 2 2M14 1v6M12 5l2 2 2-2', 'M1 2l9 4 10-4M2 16l2-7 2 7M8 9v7h4V9M14 9h4M16 9v7M19 9h2v7h-2z', 'M2 5l17-3M2 15l17-3M2 12l6-4 4 2 7-5', 'M6 3v12M4 6h4v6H4zM6 6v6M15 2v12M13 5h4v5h-4z',
  'M2 15l6-4 5 3 6-6M12 3a3 3 0 1 1 2 4M14 6l5 5', 'M1 14l6-5 5 2 8-7M2 11h18', 'M2 3h18v12H2zM15 3v12M6 6l5 5M11 8v3H8', 'M11 1v8M8 6l3 3 3-3M2 10h18v6H2zM6 10v6M16 10v6', 'M2 2h7v6H2zM12 2v6h7V2M15 2v6M2 10h7M2 13h7M2 16h7M12 10v6M15 10v6M19 10v6',
  'M2 3h18v12H2zM2 5h18M6 11l4-3', 'M3 8l3 3 3-3M6 10a6 5 0 1 1 5 5', 'M19 8l-3 3-3-3M16 10a6 5 0 1 0-5 5', 'M11 2a6 6 0 1 0 .1 0M15 13l3 3', 'M2 3h4v12H2zM9 14l4-8h7l-4 8zM11 10h7', 'M6 2v10M2 7h9M12 9l7 6-2 2-6-6z', 'M4 4h10M12 8l7 7-2 2-6-7z', 'M5 2v10l3-2M11 9l6 6-2 2-5-6z', 'M3 15L19 3',
  'M3 15L16 3M3 15h14M9 10a5 5 0 0 1 3 5', 'M6 3l10 9-2 4L4 7z', 'M3 4h9M7.500 4v12M16 1v6M13 4h6'].map(d => `<svg width="22" height="18" fill="none" stroke="#555" stroke-width="1.300"><path d="${d}"/></svg>`).join('');

// ---- Monthly candle chart ----
const R = '#dc0000', B = '#0000b4', px = v => v / 1.782 + 77, py = v => v / 2.306 - 95;
const candles = `b602,606,567,662 r537,610,520,622 r496,546,482,549 b487,507,470,517 b510,543,485,556 b548,606,533,622 b603,606,567,622 b604,607,568,629 r563,606,528,612 b569,579,548,603 b580,586,556,603 b583,648,577,656 r629,650,593,658 b622,686,615,689 b684,733,678,739 b726,788,724,790 b784,865,783,868 r836,865,832,882 r790,842,768,850 r761,789,717,805 r717,761,551,771 b716,736,687,740 b733,802,730,812 b800,847,786,860 r842,846,814,873 r792,834,785,843 b805,808,761,823 b813,862,806,868 b858,862,842,867 b860,874,855,880 b874,883,869,895 r861,883,851,886 r826,867,819,870 b827,873,823,880 r841,875,822,880 b841,868,836,874 r867,872,852,886 b849,866,841,875 b864,884,858,888 r882,886,870,890 r874,883,868,888 b875,889,871,891 b889,922,884,925 b918,934,911,938 r893,936,880,959 b894,935,890,938 b934,938,900,941 b936,963,931,968 b962,971,950,974 b968,1002,960,1005 b984,992,980,1005 b990,1004,985,1006 b998,1008,992,1010 r726,1007,683,1008 b706,786,683,842 b780,858,763,860 b855,881,852,932 b880,902,875,910 r889,902,877,908 b887,918,884,920 b916,925,912,940 r902,924,893,926 r892,908,881,912 b892,899,880,905 r889,900,884,905 r883,892,873,896 b885,890,880,897 b887,905,884,908 r888,905,880,907 b883,895,879,900 b893,912,888,922 b913,940,908,943 b938,950,929,957 b950,960,944,966 b959,966,952,972 r963,968,958,972 r933,965,927,968 b932,942,922,950 b943,958,938,960 b956,961,951,963 b958,963,952,968 r954,962,946,968 b956,976,950,982 b974,978,965,981 b975,979,970,985 r970,979,962,982 b970,978,961,981 b977,980,968,986 r972,980,967,984 b971,986,965,990 b980,985,975,988 r976,987,970,989 r978,988,972,996 b977,984,972,987 r978,984,974,988 b976,986,970,990 r979,983,975,988 b978,982,974,988 b978,987,972,990 b980,990,965,1005 r978,988,970,992 r958,979,951,984 b955,963,942,968 r938,961,933,965 b938,942,918,948 r915,942,907,945 r885,912,874,922 r806,886,775,890 b809,815,805,822`.split(' ');
const volumes = `b1436 b1443 r1424 b1440 r1443 b1444 b1444 b1442 b1445 r1446 b1445 r1445 r1441 b1445 b1445 b1445 b1446 g1445 r1445 b1444 b1446 b1443 b1444 r1437 b1434 r1441 b1432 b1434 r1425 r1385 r1381 r1310 b1416 b1414 b1400 r1406 r1371 b1358 b1386 r1413 b1420 b1416 r1394 r1390 b1410 r1373 b1400 r1391 r1393 b1414 g1396 r1389 b1404 b1390 b1403 r1252 b1319 b1337 b1236 b1326 b1252 r1290 b1259 b1367 r1402 b1393 b1427 b1289 b1284 r1393 b1414 b1418 r1400 r1416 b1416 r1425 r1412 b1430 b1431 r1430 b1417 b1430 b1406 r1415 b1354 b1397 r1394 r1091 b1164 b1388 b1418 b1420 r1393 b1411 g1426 b1431 r1417 b1409 b1427 r1415 b1432 r1433 b1423 r1432 b1434 r1436 b1437 r1438 b1425 b1424 b1397 r1397 r1370 b1325 r1388 b1337 r1314 r1310 r1121 b1440`.split(' ');
const line = (pts, c) => `<polyline fill="none" stroke="${c}" stroke-width="1.200" points="${pts.split(' ').map(p => { const [a, b] = p.split(','); return px(+a).toFixed(1) + ',' + py(+b).toFixed(1); }).join(' ')}"/>`;
const txt = (x, y, t, c = '#444', a = 'start') => `<text x="${x}" y="${y}" fill="${c}" text-anchor="${a}">${t}</text>`;
let s = '';
const L = 6, AX = Math.round(px(1391)) + .5;
for (const y of [345, 432, 520, 605, 692, 780, 955, 1115, 1172, 1227, 1283, 1338, 1393]) s += `<path d="M${L} ${py(y).toFixed(0)}.5H${AX}" stroke="#e8e8e8" stroke-dasharray="1 5"/>`;
const years = [[-125, '2011'], [26, '2012'], [177, '2013'], [328, '2014'], [478, '2015'], [630, '2016'], [780, '2017'], [931, '2018'], [1081, '2019'], [1232, '2020'], [1369, '2020']];
years.forEach(([x, t]) => { s += `<path d="M${px(x).toFixed(0)}.5 5V534" stroke="#e8e8e8" stroke-dasharray="1 5"/><path d="M${px(x).toFixed(0)}.5 535v8" stroke="#000"/>` + txt(px(x) + 1.5, 547, t); });
candles.forEach((c, i) => {
  const col = c[0] === 'r' ? R : B, [t, b, h, l] = c.slice(1).split(',').map(Number), x = Math.round(px(31 + 12.55 * (i - 1))) + .5;
  s += `<path d="M${x} ${py(h).toFixed(1)}V${py(l).toFixed(1)}" stroke="${col}"/><rect x="${x - 2.5}" y="${py(t).toFixed(1)}" width="5" height="${Math.max(1, (b - t) / 2.306).toFixed(1)}" fill="${col}"/>`;
});
volumes.forEach((c, i) => {
  const col = { r: R, b: B, g: '#5fbf1f' }[c[0]], x = Math.round(px(31 + 12.55 * (i - 12))), y = +c.slice(1);
  s += `<rect x="${x - 3}" y="${py(y).toFixed(1)}" width="6" height="${((1450 - y) / 2.306).toFixed(1)}" fill="${col}"/>`;
});
s += line('0,567 19,583 31,575 44,556 69,539 81,539 94,551 106,573 131,592 150,587 164,592 182,628 207,692 232,768 257,808 270,798 282,773 294,763 307,768 319,776 332,800 344,811 357,818 382,845 408,868 433,860 446,854 470,856 495,865 520,873 533,873 546,886 571,897 583,898 608,913 634,953 660,984 672,993 698,925 722,858 735,830 747,860 760,879 785,906 810,908 835,900 860,889 886,892 911,910 935,934 960,960 986,954 1023,949 1048,955 1073,970 1098,973 1161,976 1199,984 1224,981 1262,984 1287,976 1312,958 1337,941 1350,927 1362,900 1374,875', '#00b400')
  + line('0,473 31,471 69,481 94,513 119,540 144,549 170,564 194,588 220,617 245,644 282,663 319,712 344,728 382,774 421,808 452,828 490,829 520,839 546,844 583,862 621,883 672,917 698,910 722,909 760,912 797,915 822,915 848,910 890,899 923,886 940,900 960,912 998,918 1048,932 1086,943 1149,963 1224,972 1262,977 1300,978 1337,973 1355,965 1374,950', '#c80000')
  + line('0,464 31,460 56,452 69,453 94,464 131,481 182,501 232,532 282,560 332,587 382,605 433,626 483,640 533,663 571,685 608,718 660,755 698,771 748,795 797,819 848,839 898,862 935,876 960,881 1011,888 1061,900 1111,911 1174,920 1224,931 1274,940 1337,942 1360,940 1374,934', '#0032c8')
  + line('0,667 50,653 94,643 157,628 207,616 282,605 357,602 433,601 533,607 608,614 672,624 735,628 822,642 873,662 935,688 986,705 1036,731 1086,747 1136,758 1212,778 1262,791 1312,808 1350,826 1374,834', '#ff9600')
  + line('-128,1424 -110,1427 -90,1436 -70,1445 0,1443 130,1444 182,1444 220,1439 245,1425 270,1387 294,1381 312,1386 332,1400 357,1385 382,1395 408,1409 446,1400 483,1393 533,1398 558,1388 571,1370 596,1320 621,1296 647,1290 660,1274 672,1294 698,1345 722,1379 735,1358 772,1362 797,1410 848,1425 898,1426 935,1408 960,1390 973,1335 986,1281 1023,1297 1036,1370 1048,1403 1061,1416 1124,1420 1174,1431 1212,1437 1249,1431 1287,1396 1325,1361 1350,1335 1362,1296 1374,1302', '#00b400')
  + line('-128,1436 -60,1438 60,1441 207,1442 270,1433 332,1415 408,1406 446,1396 483,1393 571,1398 596,1386 647,1352 710,1352 748,1340 797,1345 848,1366 898,1396 923,1404 948,1398 973,1385 998,1381 1136,1383 1187,1392 1212,1398 1236,1420 1287,1424 1325,1410 1362,1384 1374,1387', '#0032c8')
  + `<path d="M${AX} 5V535M${L} 5.500H${AX}M${L} 359.500H918M${L} 535.500H${AX}M${L}.5 5V535" stroke="#000" fill="none"/>`;
[['40,000', 342], ['35,000', 429], ['30,000', 517], ['25,000', 602], ['20,000', 690], ['15,000', 778], ['10,000', 867], ['5,000', 953], ['300,000K', 1112], ['250,000K', 1170], ['200,000K', 1225], ['150,000K', 1281], ['100,000K', 1336], ['50,000K', 1392], ['0K', 1438]]
  .forEach(([t, y]) => { s += `<path d="M${AX} ${py(y + 3).toFixed(0)}.5h4" stroke="#000"/>` + txt(915, py(y) + 4, t, '#444', 'end'); });
s += `<rect x="${px(1384)}" y="${py(740)}" width="4" height="31" fill="${R}"/><rect x="${px(1384)}" y="${py(812)}" width="4" height="29" fill="${B}"/>`
  + `<rect x="866" y="${py(796)}" width="49" height="28" fill="#0000c8"/>` + txt(914, py(812) + 4, '12,950', '#fff', 'end') + txt(914, py(845) + 4, '(-2.63%)', '#fff', 'end')
  + `<path d="M866 ${py(805)}l-7 4 7 4z" fill="#0000c8"/><rect x="862.500" y="218.500" width="39" height="13" fill="#fff" stroke="#000"/>` + txt(864, py(739) + 4, '17,250', '#d00')
  + `<rect x="862.500" y="279.500" width="34" height="13" fill="#fff" stroke="#000"/>` + txt(864, py(879) + 4, '9,350', '#00c')
  + txt(px(414), py(1031) + 4, '1,890(585.19% 2016/04)', '#00a') + `<path d="M${px(652)} ${py(1031)}H${px(673)}V${py(1014)}m-3 4l3-4 3 4" fill="none" stroke="#00a"/>`
  + txt(px(10), 18, ',648)', '#00b400') + txt(px(84), 18, '20(5,236)', '#c80000') + txt(px(202), 18, '60(6,064)', '#0032c8') + txt(px(320), 18, '120(11,987)', '#ff9600')
  + `<path d="M${px(76)} 9v8" stroke="#c80000" stroke-width="3"/><path d="M${px(194)} 9v8" stroke="#0032c8" stroke-width="3"/><path d="M${px(312)} 9v8" stroke="#ff9600" stroke-width="3"/>`
  + txt(px(10), 32, '.28% 2011/01)', '#c80000') + txt(px(10), 373, '(129,927,853)', '#00b400') + txt(px(170), 373, '20(56,373,363)', '#0032c8') + `<path d="M${px(162)} 364v8" stroke="#0032c8" stroke-width="3"/>`;
for (const y of [7, 362]) s += `<rect x="837.500" y="${y}.5" width="7" height="7" fill="#fff" stroke="#000" stroke-width="1.500"/><rect x="840" y="${y + 3}" width="2.500" height="2.500"/><rect x="847" y="${y}" width="8" height="8"/><path d="M849 ${y + 2}l4 4m0-4l-4 4" stroke="#fff"/>`;
$('#chart').innerHTML = s;

// Hangul runs take their own face and pitch, so that a syllable is twice as wide as a digit.
const walker = document.createTreeWalker($('.app'), NodeFilter.SHOW_TEXT), nodes = [];
while (walker.nextNode()) nodes.push(walker.currentNode);
nodes.forEach(n => {
  if (!/[\u3131-\uD7A3※]/.test(n.data) || n.parentNode.closest('svg')) return;
  const w = document.createElement('span');
  n.data.split(/([\u3131-\uD7A3※]+)/).forEach((part, i) => {
    if (!part) return;
    if (i % 2) { const k = document.createElement('span'); k.className = 'k'; k.textContent = part; w.append(k); } else w.append(part);
  });
  n.replaceWith(w);
});
```
